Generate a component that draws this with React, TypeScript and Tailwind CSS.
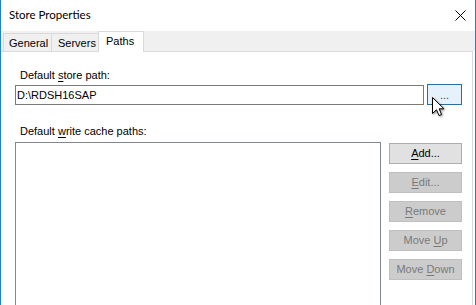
import React from "react";

const ui = { fontFamily: '"Liberation Sans", Arial, sans-serif' };
const title = { fontFamily: 'Lato, "Noto Sans", sans-serif' };

const SideButton = ({
  pre,
  hot,
  post,
  disabled
}: {
  pre: string;
  hot: string;
  post: string;
  disabled?: boolean;
}) => (
  <div
    className={
      "h-[21px] w-[73px] flex items-center justify-center border text-[11px] leading-[13px] " +
      (disabled
        ? "bg-[#cccccc] border-[#bfbfbf] text-[#7a7a7a]"
        : "bg-[#e1e1e1] border-[#adadad] text-black")
    }
  >
    <span>
      {pre}
      <span className="underline underline-offset-[2px]">{hot}</span>
      {post}
    </span>
  </div>
);

export default function App() {
  return (
    <div
      className="relative w-[476px] h-[305px] overflow-hidden bg-white border-x border-[#1883d7] flex flex-col text-black"
      style={ui}
    >
      {/* title bar */}
      <div className="h-[31px] flex items-start justify-between shrink-0">
        <div className="pl-[8px] pt-[7px] text-[11.5px] leading-[16px]" style={title}>
          Store Properties
        </div>
        <svg className="mt-[10px] mr-[9px]" width="11" height="11" viewBox="0 0 11 11">
          <path d="M0.5 0.5 L10.5 10.5 M10.5 0.5 L0.5 10.5" stroke="#000" strokeWidth="1" />
        </svg>
      </div>

      {/* tabs */}
      <div className="h-[20px] bg-[#f0f0f0] flex items-end pl-[2px] shrink-0 text-[11px] leading-[13px]">
        <div className="h-[18px] w-[49px] border-l border-t border-r border-[#d9d9d9] pl-[5px] pt-[3px]">
          General
        </div>
        <div className="h-[18px] w-[46px] border-t border-[#d9d9d9] pl-[6px] pt-[3px]">
          Servers
        </div>
        <div className="relative z-10 -mb-px h-[21px] w-[46px] border-l border-t border-r border-[#d9d9d9] bg-white pl-[7px] pt-[3px]">
          Paths
        </div>
      </div>

      {/* tab page */}
      <div className="flex-1 border-t border-r border-[#d9d9d9] mr-[2px] pl-[14px] pt-[17px] text-[11px] leading-[13px]">
        <div className="h-[13px] pl-[5px]">
          Default <span className="underline underline-offset-[2px]">s</span>tore path:
        </div>
        <div className="mt-[2px] flex items-end gap-[3px]">
          <div className="h-[20px] w-[409px] border border-[#7a7a7a] pl-[1px] pt-[3px]">
            D:\RDSH16SAP
          </div>
          <div className="h-[21px] w-[35px] border border-[#0078d7] bg-[#e5f1fb] flex items-center justify-center text-[#3c3c50] pt-[1px]">
            ...
          </div>
        </div>

        <div className="mt-[20px] h-[13px] pl-[5px]">
          Default <span className="underline underline-offset-[2px]">w</span>rite cache paths:
        </div>
        <div className="mt-[4px] flex items-start gap-[8px]">
          <div className="h-[200px] w-[366px] border border-[#828790]" />
          <div className="mt-[1px] flex flex-col gap-[8px]">
            <SideButton pre="" hot="A" post="dd..." />
            <SideButton pre="" hot="E" post="dit..." disabled />
            <SideButton pre="" hot="R" post="emove" disabled />
            <SideButton pre="Move " hot="U" post="p" disabled />
            <SideButton pre="Move " hot="D" post="own" disabled />
          </div>
        </div>
      </div>

      {/* mouse pointer */}
      <svg
        className="absolute left-[431px] top-[97px] z-20"
        width="14"
        height="21"
        viewBox="0 0 14 21"
        style={{ filter: "drop-shadow(1px 1px 1px rgba(0,0,0,0.45))" }}
      >
        <path
          d="M0.5 0.5 L0.5 16.5 L4.5 12.8 L7 18.5 L9.5 17.5 L7.2 11.8 L12 11.8 Z"
          fill="#fff"
          stroke="#000"
          strokeWidth="1"
          strokeLinejoin="miter"
        />
      </svg>
    </div>
  );
}
